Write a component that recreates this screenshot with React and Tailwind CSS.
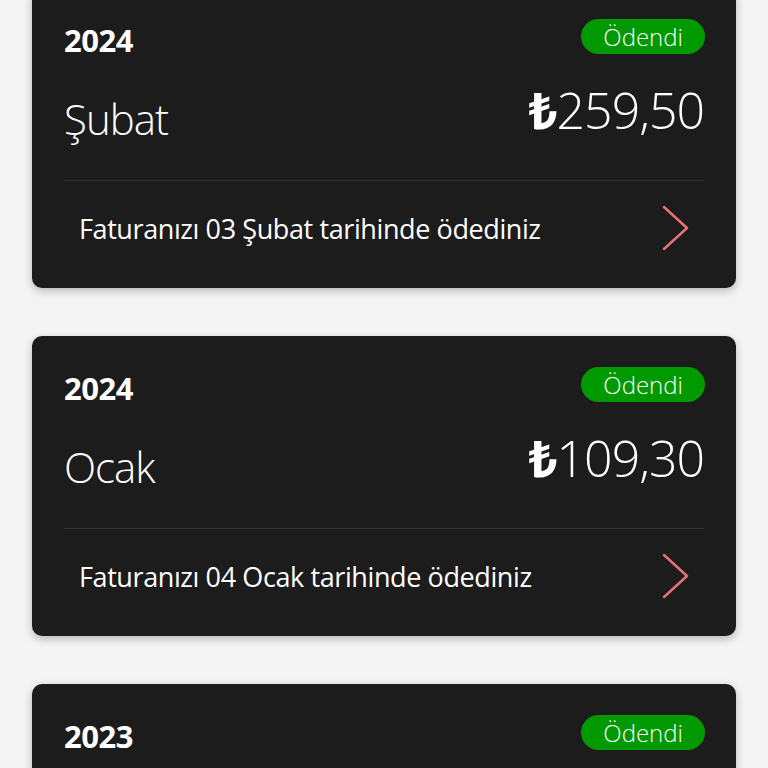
const bills = [
  { year: '2024', month: 'Şubat', amount: '259,50', note: 'Faturanızı 03 Şubat tarihinde ödediniz' },
  { year: '2024', month: 'Ocak', amount: '109,30', note: 'Faturanızı 04 Ocak tarihinde ödediniz' },
  { year: '2023', month: 'Aralık', amount: '198,40', note: 'Faturanızı 05 Aralık tarihinde ödediniz' },
];

function Chevron() {
  return (
    <svg width="28" height="46" viewBox="0 0 28 46" fill="none">
      <path d="M2 2 L25 23 L2 44" stroke="#e8707a" strokeWidth="2.5" strokeLinecap="round" strokeLinejoin="round" />
    </svg>
  );
}

function BillCard({ bill }) {
  return (
    <div className="h-[300px] shrink-0 rounded-[10px] bg-[#1c1c1c] px-8 pt-[28px] text-white shadow-[0_3px_8px_rgba(0,0,0,0.25)]">
      {/* Header */}
      <div className="flex h-[48px] items-center justify-between">
        <span className="text-[31px] font-bold leading-none tracking-[-0.5px]">{bill.year}</span>
        <span className="-mt-[8px] mr-[-1px] rounded-full bg-[#009a00] px-[22px] py-[2px] text-[24px] font-light leading-[31px]">
          Ödendi
        </span>
      </div>

      {/* Month / amount */}
      <div className="mt-[18px] flex h-[70px] items-center justify-between">
        <span className="mt-[4px] text-[42px] font-light leading-none tracking-[-1px]">{bill.month}</span>
        <span className="-mt-[14px] text-[50px] font-light leading-none tracking-[-1px]">
          <span className="font-bold">₺</span>
          {bill.amount}
        </span>
      </div>

      <div className="mt-[28px] h-px bg-[#333333]" />

      {/* Payment note */}
      <div className="flex h-[94px] items-center justify-between pl-[15px] pr-[14px]">
        <span className="text-[27px] font-normal leading-none tracking-[-0.4px]">{bill.note}</span>
        <Chevron />
      </div>
    </div>
  );
}

export default function App() {
  return (
    <div
      className="h-[768px] overflow-hidden bg-[#f4f4f4] px-8"
      style={{ fontFamily: '"Open Sans", "Noto Sans", sans-serif' }}
    >
      <div className="-mt-[12px] flex flex-col gap-[48px]">
        {bills.map((bill, i) => (
          <BillCard key={i} bill={bill} />
        ))}
      </div>
    </div>
  );
}
